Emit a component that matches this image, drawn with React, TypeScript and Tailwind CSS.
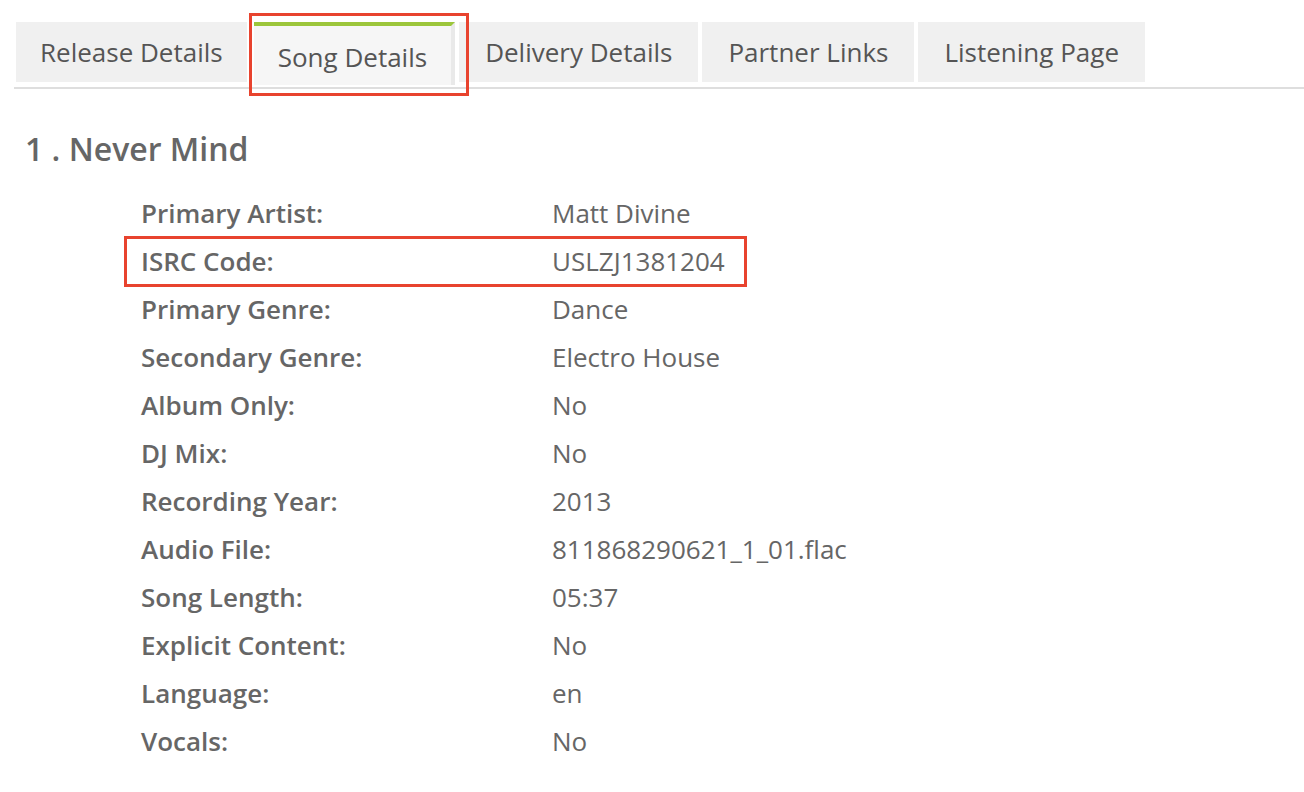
export default function App() {
  const tabs = ["Release Details", "Song Details", "Delivery Details", "Partner Links", "Listening Page"]
  const rows: [string, string][] = [
    ["Primary Artist:", "Matt Divine"],
    ["ISRC Code:", "USLZJ1381204"],
    ["Primary Genre:", "Dance"],
    ["Secondary Genre:", "Electro House"],
    ["Album Only:", "No"],
    ["DJ Mix:", "No"],
    ["Recording Year:", "2013"],
    ["Audio File:", "811868290621_1_01.flac"],
    ["Song Length:", "05:37"],
    ["Explicit Content:", "No"],
    ["Language:", "en"],
    ["Vocals:", "No"],
  ]

  return (
    <div className="min-h-screen bg-white text-[#555] font-['Open_Sans',sans-serif]">
      {/* Tabs */}
      <div className="pt-[22px] pl-[14px]">
        <div className="flex items-start border-b-2 border-[#dedede] h-[67px] pl-[2px]">
          {tabs.map((t, i) =>
            i === 1 ? (
              <div key={t} className="relative ml-[7px] mr-[4px]">
                <div className="h-[63px] bg-[#f6f6f6] border-t-4 border-[#9cc63b] border-r-4 border-r-[#e9e9e9] pl-[24px] pr-[24px] flex items-center text-[26px] leading-none pt-[2px]">
                  {t}
                </div>
                <div className="absolute -left-[5px] -top-[9px] w-[220px] h-[83px] border-[3px] border-[#e8432e] pointer-events-none" />
              </div>
            ) : (
              <div
                key={t}
                className={`h-[60px] bg-[#f0f0f0] flex items-center text-[26px] leading-none ${i === 0 ? "px-[24px]" : "px-[26px]"} ${i > 2 ? "ml-[4px]" : ""}`}
              >
                {t}
              </div>
            )
          )}
        </div>
      </div>

      {/* Song */}
      <div className="pl-[25px] pt-[40px]">
        <h2 className="text-[32px] font-semibold text-[#666] leading-[40px]">1 . Never Mind</h2>
      </div>

      <div className="pl-[141px] pt-[20px] text-[26px] text-[#666]">
        {rows.map(([label, value]) => (
          <div key={label} className="relative grid grid-cols-[411px_1fr] h-[48px] items-center">
            <div className="font-semibold">{label}</div>
            <div>{value}</div>
            {label === "ISRC Code:" && (
              <div className="absolute -left-[17px] top-0 w-[623px] h-[51px] -mt-[1px] border-[3px] border-[#e8432e] pointer-events-none" />
            )}
          </div>
        ))}
      </div>
    </div>
  )
}
